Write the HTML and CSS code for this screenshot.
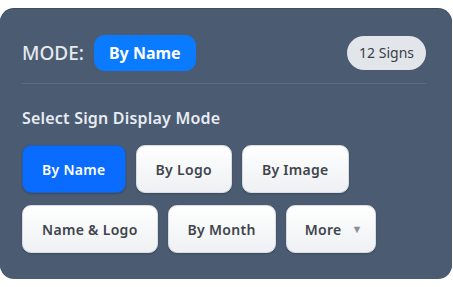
FILE: index.html
```html
<!DOCTYPE html>
<html lang="en">
<head>
    <meta charset="UTF-8">
    <title>Sign Display Mode</title>
    <link rel="stylesheet" href="styles.css">
</head>
<body>

    <div class="panel">
        <div class="mode-row">
            <div class="mode-label">
                <span class="mode-title">MODE:</span>
                <span class="mode-badge">By Name</span>
            </div>
            <span class="count-pill">12 Signs</span>
        </div>

        <div class="select-block">
            <p class="select-title">Select Sign Display Mode</p>
            <div class="mode-buttons">
                <button class="mode-btn active">By Name</button>
                <button class="mode-btn">By Logo</button>
                <button class="mode-btn">By Image</button>
                <button class="mode-btn">Name &amp; Logo</button>
                <button class="mode-btn">By Month</button>
                <button class="mode-btn more">More <span class="caret">&#9660;</span></button>
            </div>
        </div>
    </div>

</body>
</html>
```

FILE: styles.css
```css
body {
    margin: 0;
    padding: 9px 1px 8px 0;
    background: #fff;
    font-family: "Noto Sans", "Open Sans", sans-serif;
}

.panel {
    height: 270px;
    box-sizing: border-box;
    background: #4a5b72;
    border-radius: 14px;
    padding: 0 26px 0 22px;
    box-shadow: 0 -1px 0 #3e4c60;
}

.mode-row {
    display: flex;
    align-items: center;
    justify-content: space-between;
    height: 75px;
    padding-top: 14px;
    box-sizing: border-box;
    border-bottom: 1px solid #5d6c82;
}

.mode-label {
    display: flex;
    align-items: center;
    gap: 10px;
}

.mode-title {
    color: #e6e9ee;
    font-size: 19px;
    font-weight: 500;
}

.mode-badge {
    background: #0a7bff;
    color: #fff;
    font-weight: 700;
    font-size: 16px;
    line-height: 36px;
    padding: 0 15px;
    border-radius: 11px;
}

.count-pill {
    background: #e2e5ea;
    color: #3a3f47;
    font-size: 14px;
    line-height: 34px;
    padding: 0 12px;
    border-radius: 17px;
}

.select-block {
    padding-top: 24px;
}

.select-title {
    margin: 0 0 17px;
    color: #e8ecf2;
    font-weight: 600;
    font-size: 16px;
    line-height: 20px;
    letter-spacing: 0.2px;
}

.mode-buttons {
    display: flex;
    flex-wrap: wrap;
    gap: 12px 10px;
    width: 370px;
}

.mode-btn {
    height: 48px;
    padding: 0 19px;
    border: 1px solid #d9dde3;
    border-radius: 9px;
    background: linear-gradient(#ffffff, #eef0f3);
    color: #40454c;
    font-family: "Noto Sans", sans-serif;
    font-weight: 600;
    font-size: 14px;
    letter-spacing: 0.3px;
    box-shadow: 0 1px 2px rgba(0, 0, 0, 0.2);
}

.mode-btn.active {
    background: #0a6cff;
    border-color: #1f5fb8;
    color: #fff;
}

.mode-btn.more {
    padding: 0 12px 0 18px;
}

.caret {
    color: #8c9096;
    font-size: 11px;
    margin-left: 6px;
    vertical-align: 2px;
}
```
